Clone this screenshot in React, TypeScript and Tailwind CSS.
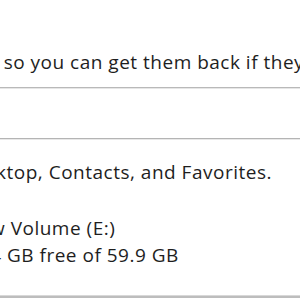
export default function App() {
  return (
    <div
      className="w-[300px] h-[300px] overflow-hidden bg-white text-[#1e1e1e] flex flex-col text-[19px] tracking-[0.5px]"
      style={{ fontFamily: '"Open Sans", "Noto Sans", sans-serif' }}
    >
      {/* top description */}
      <div className="pt-[50px] pb-[13px]">
        <p className="whitespace-nowrap leading-[24px] -ml-[40px]">
          files so you can get them back if they're lost or damaged.
        </p>
      </div>
      <div className="h-[2px] bg-[#b9b9b9] border-b border-[#e6e6e6]" />

      {/* empty band */}
      <div className="h-[49px]" />
      <div className="h-[2px] bg-[#b4b4b4] border-b border-[#e8e8e8]" />

      {/* library line */}
      <div className="pt-[20px]">
        <p className="whitespace-nowrap leading-[24px] -ml-[39px]">
          Desktop, Contacts, and Favorites.
        </p>
      </div>

      {/* drive info */}
      <div className="pt-[31px] flex flex-col">
        <p className="whitespace-nowrap leading-[27px] -ml-[36px]">
          New Volume (E:)
        </p>
        <p className="whitespace-nowrap leading-[27px] -ml-[38px]">
          32.4 GB free of 59.9 GB
        </p>
      </div>

      <div className="flex-1" />
      <div className="h-[3px] bg-[#bdbdbd] border-t border-[#d8d8d8] mb-[2px]" />
    </div>
  );
}
